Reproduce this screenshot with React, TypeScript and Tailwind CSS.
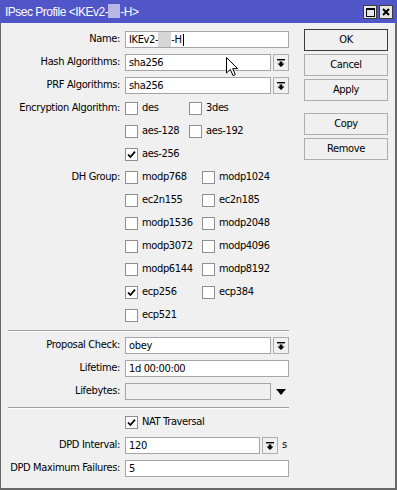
import React from 'react';

const font = "font-['DejaVu_Sans_Condensed','Liberation_Sans',sans-serif]";

// small "bar + arrow down" glyph used on combo buttons
const DropIcon: React.FC = () => (
  <svg width="8" height="8" viewBox="0 0 8 8" className="fill-black">
    <rect x="0" y="0" width="8" height="1.4" />
    <path d="M2.6 2.6h2.8v1.8h2.1L4 8 0.5 4.4h2.1z" />
  </svg>
);

const DropButton: React.FC = () => (
  <div className="ml-[2px] flex h-[17px] w-[16px] items-center justify-center border border-[#adadad] bg-[#f0f0f0]">
    <DropIcon />
  </div>
);

interface TextBoxProps {
  width: number;
  children?: React.ReactNode;
  disabled?: boolean;
}

const widthClass: Record<number, string> = {
  164: 'w-[164px]',
  146: 'w-[146px]',
  135: 'w-[135px]',
};

const TextBox: React.FC<TextBoxProps> = ({ width, children, disabled }) => (
  <div
    className={`flex h-[17px] items-center border border-[#a5a5a5] px-[3px] leading-none ${
      disabled ? 'bg-[#f0f0f0]' : 'bg-white'
    } ${widthClass[width]}`}
  >
    {children}
  </div>
);

const Row: React.FC<{ label?: string; children: React.ReactNode }> = ({ label, children }) => (
  <div className="flex h-[23px] items-center">
    <div className="w-[119px] whitespace-nowrap text-right">{label}</div>
    <div className="ml-[5px] flex items-center">{children}</div>
  </div>
);

const Check: React.FC<{ label: string; checked?: boolean; col?: string }> = ({ label, checked, col }) => (
  <div className={`flex items-center ${col || ''}`}>
    <div className="flex h-[13px] w-[13px] items-center justify-center border border-[#8f8f8f] bg-white">
      {checked && (
        <svg width="9" height="9" viewBox="0 0 9 9">
          <path d="M1 4.5 L3.4 7 L8 1.6" fill="none" stroke="black" strokeWidth="1.8" />
        </svg>
      )}
    </div>
    <span className="ml-[4px] whitespace-nowrap">{label}</span>
  </div>
);

const Separator: React.FC<{ className: string }> = ({ className }) => (
  <div className={`ml-[7px] h-[2px] w-[281px] border-t border-[#a0a0a0] border-b border-b-white ${className}`} />
);

const WinButton: React.FC<{ label: string; primary?: boolean; className?: string }> = ({ label, primary, className }) => (
  <div
    className={`flex h-[22px] w-[84px] items-center justify-center border bg-[#f0f0f0] ${
      primary ? 'border-[#3a3a3a]' : 'border-[#adadad]'
    } ${className || ''}`}
  >
    {label}
  </div>
);

const dhGroups: [string, string | null, boolean][] = [
  ['modp768', 'modp1024', false],
  ['ec2n155', 'ec2n185', false],
  ['modp1536', 'modp2048', false],
  ['modp3072', 'modp4096', false],
  ['modp6144', 'modp8192', false],
  ['ecp256', 'ecp384', true],
  ['ecp521', null, false],
];

export default function App() {
  return (
    <div className={`relative flex h-[490px] w-[397px] flex-col overflow-hidden text-[11px] tracking-[-0.35px] text-black ${font}`}>
      {/* title bar */}
      <div className="flex h-[23px] shrink-0 items-center bg-[#5056c8] pl-[5px] pr-[4px] font-['Liberation_Sans',sans-serif] text-[12px] tracking-[-0.5px] text-white">
        <span className="whitespace-nowrap">
          IPsec Profile &lt;IKEv2-
          <span className="inline-block h-[14px] w-[12px] translate-y-[2px] bg-[#b7b9e4]" />
          -H&gt;
        </span>
        <div className="ml-auto flex items-center gap-[2px] pt-[1px]">
          <div className="flex h-[14px] w-[14px] items-center justify-center border border-[#3c3c3c] bg-[#e6e6e6]">
            <div className="h-[9px] w-[9px] border border-t-2 border-black" />
          </div>
          <div className="flex h-[14px] w-[14px] items-center justify-center border border-[#3c3c3c] bg-[#e6e6e6]">
            <svg width="8" height="8" viewBox="0 0 8 8">
              <path d="M1 1 L7 7 M7 1 L1 7" stroke="black" strokeWidth="2" />
            </svg>
          </div>
        </div>
      </div>

      {/* body */}
      <div className="flex flex-1 border-b-2 border-l border-r-2 border-[#686868] bg-[#f0f0f0]">
        <div className="w-[288px] pt-[5px]">
          <Row label="Name:">
            <TextBox width={164}>
              IKEv2-
              <span className="inline-block h-[15px] w-[13px] bg-[#d6d6d6]" />
              -H<span className="ml-[1px] inline-block h-[12px] w-[1px] bg-black" />
            </TextBox>
          </Row>
          <Row label="Hash Algorithms:">
            <TextBox width={146}>sha256</TextBox>
            <DropButton />
          </Row>
          <Row label="PRF Algorithms:">
            <TextBox width={146}>sha256</TextBox>
            <DropButton />
          </Row>
          <Row label="Encryption Algorithm:">
            <Check label="des" col="w-[64px]" />
            <Check label="3des" />
          </Row>
          <Row>
            <Check label="aes-128" col="w-[64px]" />
            <Check label="aes-192" />
          </Row>
          <Row>
            <Check label="aes-256" checked />
          </Row>
          {dhGroups.map(([a, b, checked], i) => (
            <Row key={a} label={i === 0 ? 'DH Group:' : undefined}>
              <Check label={a} checked={checked} col="w-[77px]" />
              {b && <Check label={b} />}
            </Row>
          ))}
          <Separator className="mb-[2px] mt-[3px]" />
          <Row label="Proposal Check:">
            <TextBox width={146}>obey</TextBox>
            <DropButton />
          </Row>
          <Row label="Lifetime:">
            <TextBox width={164}>1d 00:00:00</TextBox>
          </Row>
          <Row label="Lifebytes:">
            <TextBox width={146} disabled />
            <svg width="10" height="6" viewBox="0 0 10 6" className="ml-[5px]">
              <path d="M0 0 H10 L5 6 Z" fill="black" />
            </svg>
          </Row>
          <Separator className="mb-[2px] mt-[4px]" />
          <Row>
            <Check label="NAT Traversal" checked />
          </Row>
          <Row label="DPD Interval:">
            <TextBox width={135}>120</TextBox>
            <DropButton />
            <span className="ml-[4px]">s</span>
          </Row>
          <Row label="DPD Maximum Failures:">
            <TextBox width={164}>5</TextBox>
          </Row>
        </div>

        <div className="ml-[15px] flex flex-col pt-[6px]">
          <WinButton label="OK" primary />
          <WinButton label="Cancel" className="mt-[3px]" />
          <WinButton label="Apply" className="mt-[3px]" />
          <WinButton label="Copy" className="mt-[12px]" />
          <WinButton label="Remove" className="mt-[3px]" />
        </div>
      </div>

      {/* mouse pointer over the hash field */}
      <svg width="13" height="20" viewBox="0 0 13 20" className="absolute left-[226px] top-[57px]">
        <path d="M0.5 0.5 V16 L4.3 12.4 L7 18.6 L9.3 17.6 L6.7 11.6 H11.6 Z" fill="white" stroke="black" strokeWidth="1" />
      </svg>
    </div>
  );
}
